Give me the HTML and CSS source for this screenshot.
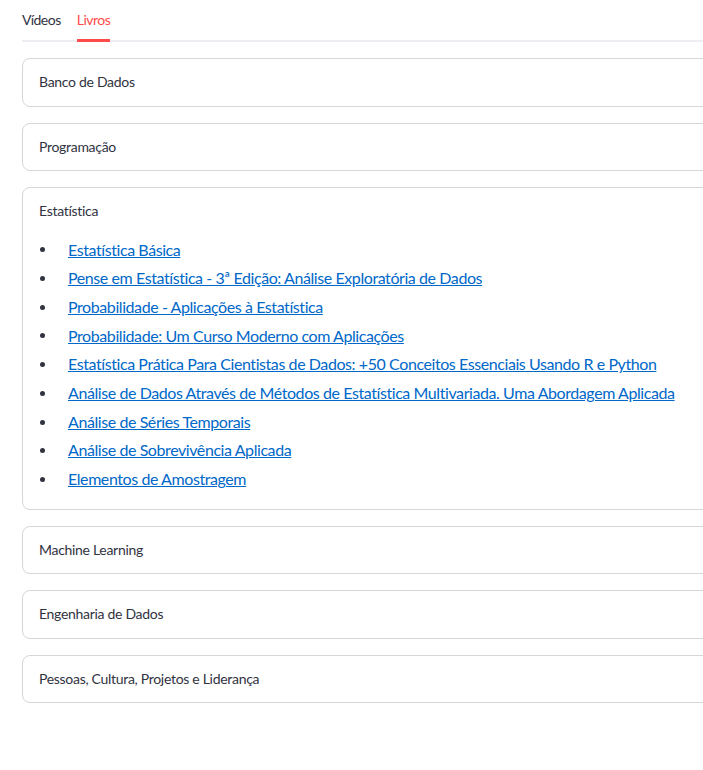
FILE: index.html
```html
<!DOCTYPE html>
<html lang="pt">
<head>
<meta charset="utf-8">
<link rel="stylesheet" href="styles.css">
</head>
<body>
<div class="page">
  <div class="tabs">
    <div class="tab">Vídeos</div>
    <div class="tab active">Livros</div>
  </div>
  <div class="expanders">
    <div class="expander"><div class="exp-head">Banco de Dados</div></div>
    <div class="expander"><div class="exp-head">Programação</div></div>
    <div class="expander open">
      <div class="exp-head">Estatística</div>
      <ul class="books">
        <li><a href="#">Estatística Básica</a></li>
        <li><a href="#">Pense em Estatística - 3ª Edição: Análise Exploratória de Dados</a></li>
        <li><a href="#">Probabilidade - Aplicações à Estatística</a></li>
        <li><a href="#">Probabilidade: Um Curso Moderno com Aplicações</a></li>
        <li><a href="#">Estatística Prática Para Cientistas de Dados: +50 Conceitos Essenciais Usando R e Python</a></li>
        <li><a href="#">Análise de Dados Através de Métodos de Estatística Multivariada. Uma Abordagem Aplicada</a></li>
        <li><a href="#">Análise de Séries Temporais</a></li>
        <li><a href="#">Análise de Sobrevivência Aplicada</a></li>
        <li><a href="#">Elementos de Amostragem</a></li>
      </ul>
    </div>
    <div class="expander"><div class="exp-head">Machine Learning</div></div>
    <div class="expander"><div class="exp-head">Engenharia de Dados</div></div>
    <div class="expander"><div class="exp-head">Pessoas, Cultura, Projetos e Liderança</div></div>
  </div>
</div>
</body>
</html>
```
FILE: styles.css
```css
html, body {
  margin: 0;
  padding: 0;
  overflow: hidden;
  background: #ffffff;
}
body {
  font-family: "Lato", "Noto Sans", sans-serif;
  color: rgb(49, 51, 63);
}
.page {
  padding-left: 22px;
  width: 720px;
}
.tabs {
  display: flex;
  gap: 16px;
  height: 40px;
  border-bottom: 2px solid #eceef2;
}
.tab {
  font-size: 14px;
  letter-spacing: -0.5px;
  line-height: 40px;
  height: 40px;
  box-sizing: border-box;
  color: rgb(49, 51, 63);
}
.tab.active {
  color: rgb(255, 75, 75);
  border-bottom: 3px solid rgb(255, 75, 75);
  height: 42px;
  line-height: 40px;
}
.expanders {
  margin-top: 16px;
  display: flex;
  flex-direction: column;
  gap: 16px;
}
.expander {
  border: 1px solid rgba(49, 51, 63, 0.2);
  border-radius: 8px;
}
.exp-head {
  font-size: 14px;
  letter-spacing: -0.3px;
  height: 46.5px;
  line-height: 46.5px;
  padding-left: 16px;
}
.books {
  list-style: none;
  margin: 0;
  padding: 1px 0 15px 17px;
}
.books li {
  display: flex;
  align-items: center;
  font-size: 16px;
  letter-spacing: -0.42px;
  line-height: 28.7px;
}
.books li::before {
  content: "";
  flex: none;
  width: 5px;
  height: 5px;
  border-radius: 50%;
  background: rgb(49, 51, 63);
  margin-right: 23px;
}
.books a {
  color: rgb(0, 104, 201);
  text-decoration: underline;
}
```
